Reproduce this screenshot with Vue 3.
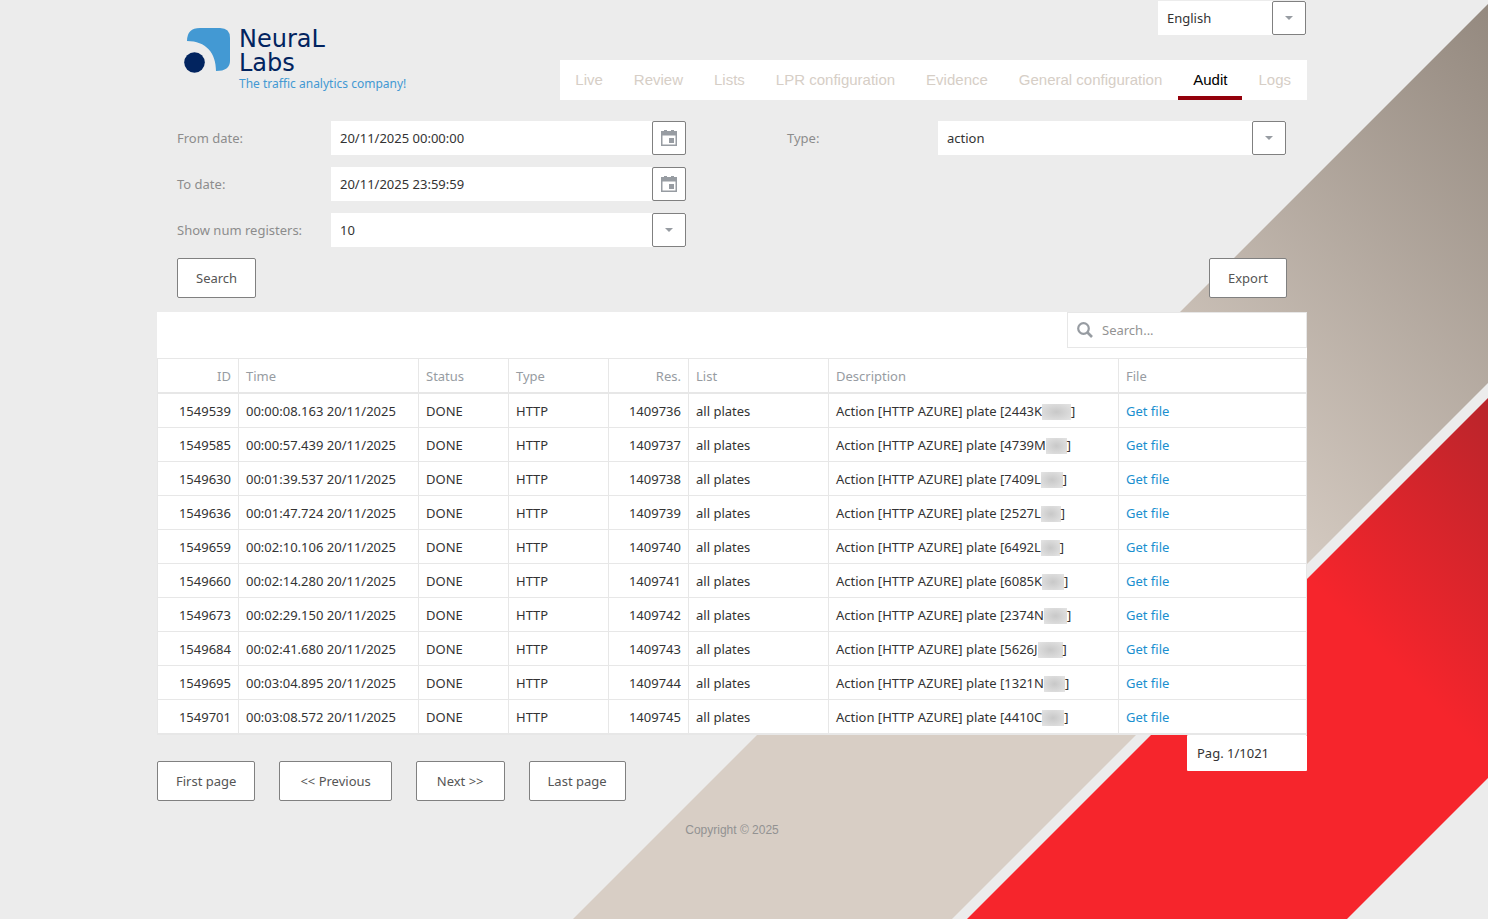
<script setup>
import { ref } from 'vue'

const language = ref('English')
const fromDate = ref('20/11/2025 00:00:00')
const toDate = ref('20/11/2025 23:59:59')
const numRegisters = ref('10')
const type = ref('action')
const query = ref('')

const tabs = ['Live', 'Review', 'Lists', 'LPR configuration', 'Evidence', 'General configuration', 'Audit', 'Logs']
const activeTab = ref('Audit')

const rows = [
  { id: 1549539, time: '00:00:08.163', res: 1409736, plate: '2443K', mask: 29 },
  { id: 1549585, time: '00:00:57.439', res: 1409737, plate: '4739M', mask: 21 },
  { id: 1549630, time: '00:01:39.537', res: 1409738, plate: '7409L', mask: 22 },
  { id: 1549636, time: '00:01:47.724', res: 1409739, plate: '2527L', mask: 20 },
  { id: 1549659, time: '00:02:10.106', res: 1409740, plate: '6492L', mask: 19 },
  { id: 1549660, time: '00:02:14.280', res: 1409741, plate: '6085K', mask: 22 },
  { id: 1549673, time: '00:02:29.150', res: 1409742, plate: '2374N', mask: 23 },
  { id: 1549684, time: '00:02:41.680', res: 1409743, plate: '5626J', mask: 25 },
  { id: 1549695, time: '00:03:04.895', res: 1409744, plate: '1321N', mask: 21 },
  { id: 1549701, time: '00:03:08.572', res: 1409745, plate: '4410C', mask: 22 },
]
</script>

<template>
  <div class="page">
    <svg class="backdrop" viewBox="0 0 1488 919" preserveAspectRatio="xMaxYMin slice" aria-hidden="true">
      <defs>
        <linearGradient id="sand" gradientUnits="userSpaceOnUse" x1="1488" y1="4" x2="1090" y2="402">
          <stop offset="0" stop-color="#94897f" />
          <stop offset="1" stop-color="#d8cec5" />
        </linearGradient>
        <linearGradient id="red" gradientUnits="userSpaceOnUse" x1="1488" y1="398" x2="1307" y2="579">
          <stop offset="0" stop-color="#b9252b" />
          <stop offset="1" stop-color="#f6252c" />
        </linearGradient>
      </defs>
      <path d="M1488 4 573 919H952L1488 383Z" fill="url(#sand)" />
      <path d="M1488 398 967 919H1347L1488 778Z" fill="url(#red)" />
    </svg>

    <div class="container">
      <header class="header">
        <a class="logo" href="#" aria-label="Neural Labs">
          <svg class="mark" viewBox="0 0 46 46" aria-hidden="true">
            <path d="M3 14Q3 1 16 1H36Q46 1 46 11V34Q46 44 32 44C32 26 22 14 3 14Z" fill="#4399d3" />
            <circle cx="10.5" cy="35.5" r="10.3" fill="#02245f" />
          </svg>
          <span class="words">
            <span class="brand">NeuraL</span>
            <span class="brand">Labs</span>
            <span class="tagline">The traffic analytics company!</span>
          </span>
        </a>
        <div class="header-right">
          <div class="combo language">
            <select v-model="language" aria-label="Language"><option>English</option></select>
            <span class="combo-arrow"></span>
          </div>
          <nav class="tabs">
            <a v-for="t in tabs" :key="t" href="#" :class="{ active: t === activeTab }" @click.prevent="activeTab = t">{{ t }}</a>
          </nav>
        </div>
      </header>

      <form class="filters" @submit.prevent>
        <div class="columns">
          <div class="column">
            <div class="field">
              <label for="from">From date:</label>
              <div class="date">
                <input id="from" v-model="fromDate" type="text" />
                <button type="button" aria-label="Pick from date">
                  <svg viewBox="0 0 16 16"><path fill-rule="evenodd" d="M0 1H3V0H6V1H10V0H13V1H16V16H0ZM1.5 5.5V14.5H14.5V5.5ZM8 8H13V13H8Z" /></svg>
                </button>
              </div>
            </div>
            <div class="field">
              <label for="to">To date:</label>
              <div class="date">
                <input id="to" v-model="toDate" type="text" />
                <button type="button" aria-label="Pick to date">
                  <svg viewBox="0 0 16 16"><path fill-rule="evenodd" d="M0 1H3V0H6V1H10V0H13V1H16V16H0ZM1.5 5.5V14.5H14.5V5.5ZM8 8H13V13H8Z" /></svg>
                </button>
              </div>
            </div>
            <div class="field">
              <label for="num">Show num registers:</label>
              <div class="combo">
                <select id="num" v-model="numRegisters"><option>10</option></select>
                <span class="combo-arrow"></span>
              </div>
            </div>
          </div>
          <div class="column">
            <div class="field">
              <label for="type">Type:</label>
              <div class="combo">
                <select id="type" v-model="type"><option>action</option></select>
                <span class="combo-arrow"></span>
              </div>
            </div>
          </div>
        </div>
        <div class="actions">
          <button class="btn" type="submit">Search</button>
          <button class="btn" type="button">Export</button>
        </div>
      </form>

      <section class="results">
        <div class="toolbar">
          <div class="search">
            <svg viewBox="0 0 16 16" aria-hidden="true">
              <circle cx="6.5" cy="6.5" r="5.3" fill="none" stroke="#979ca2" stroke-width="2.2" />
              <path d="M10.5 10.5 15 15" stroke="#979ca2" stroke-width="2.6" />
            </svg>
            <input v-model="query" type="text" placeholder="Search..." aria-label="Search results" />
          </div>
        </div>
        <table>
          <colgroup>
            <col class="c-id" /><col class="c-time" /><col class="c-status" /><col class="c-type" />
            <col class="c-res" /><col class="c-list" /><col class="c-desc" /><col />
          </colgroup>
          <thead>
            <tr>
              <th class="num">ID</th><th>Time</th><th>Status</th><th>Type</th>
              <th class="num">Res.</th><th>List</th><th>Description</th><th>File</th>
            </tr>
          </thead>
          <tbody>
            <tr v-for="r in rows" :key="r.id">
              <td class="num">{{ r.id }}</td>
              <td>{{ r.time }} 20/11/2025</td>
              <td>DONE</td>
              <td>HTTP</td>
              <td class="num">{{ r.res }}</td>
              <td>all plates</td>
              <td>Action [HTTP AZURE] plate [{{ r.plate }}<span class="mask" :style="{ width: r.mask + 'px' }"></span>]</td>
              <td><a href="#">Get file</a></td>
            </tr>
          </tbody>
        </table>
      </section>

      <div class="paging">
        <div class="pager">
          <button class="btn" type="button">First page</button>
          <button class="btn step" type="button">&lt;&lt; Previous</button>
          <button class="btn step" type="button">Next &gt;&gt;</button>
          <button class="btn" type="button">Last page</button>
        </div>
        <div class="page-count">Pag. 1/1021</div>
      </div>

      <footer>Copyright © 2025</footer>
    </div>
  </div>
</template>

<style>
body {
  background: #ececec;
}
</style>

<style scoped>
.page,
.page * {
  box-sizing: border-box;
}

.page {
  position: relative;
  min-height: 100vh;
  padding-right: 24px;
  overflow: hidden;
  color: #333;
  font: 13px/18px "Noto Sans", "Open Sans", sans-serif;
}

.backdrop {
  position: absolute;
  inset: 0;
  width: 100%;
  height: 100%;
}

.container {
  position: relative;
  max-width: 1150px;
  margin: 0 auto;
}

input,
select,
button {
  font: inherit;
  color: inherit;
}

a {
  text-decoration: none;
}

.header {
  display: flex;
  justify-content: space-between;
  height: 100px;
}

.logo {
  display: flex;
  align-items: flex-start;
  gap: 9px;
  padding: 27px 0 0 27px;
}

.mark {
  width: 46px;
  height: 46px;
}

.words {
  display: flex;
  flex-direction: column;
}

.brand {
  color: #02245f;
  font: 24px/24px "DejaVu Sans", sans-serif;
}

.tagline {
  color: #4399d3;
  font-size: 12px;
  line-height: 18px;
}

.header-right {
  display: flex;
  flex-direction: column;
  align-items: flex-end;
  justify-content: space-between;
  padding-top: 1px;
}

.language {
  width: 148px;
  margin-right: 1px;
}

.tabs {
  display: flex;
  gap: 1px;
  padding-right: 1px;
  background: #fff;
}

.tabs a {
  height: 40px;
  padding: 0 15px;
  border-bottom: 4px solid transparent;
  color: #d6cec6;
  font: 15px/40px "Liberation Sans", Arial, sans-serif;
}

.tabs .active {
  border-color: #93000b;
  color: #000;
}

.filters {
  padding: 21px 20px 14px;
}

.columns {
  display: grid;
  grid-template-columns: 509fr 499fr;
  gap: 101px;
  padding-right: 1px;
}

.column,
.field,
.date {
  display: flex;
}

.column {
  flex-direction: column;
  gap: 12px;
}

.field {
  align-items: center;
}

.field label {
  flex: 0 0 154px;
  color: #8c8c8c;
}

.column + .column label {
  flex-basis: 151px;
}

.field .combo,
.date {
  flex: 1;
}

.date input,
.combo select {
  flex: 1;
  min-width: 0;
  height: 34px;
  padding: 0 9px;
  border: 0;
  border-radius: 0;
  outline: 0;
  background: #fff;
  appearance: none;
}

.date button {
  display: grid;
  place-items: center;
  width: 34px;
  height: 34px;
  padding: 0;
  border: 1px solid #808080;
  border-radius: 2px;
  background: #fff;
}

.date svg {
  width: 16px;
  height: 16px;
  fill: #979ca2;
}

.combo {
  display: grid;
}

.combo select {
  grid-area: 1 / 1;
  width: 100%;
}

.combo-arrow {
  display: grid;
  grid-area: 1 / 1;
  place-items: center;
  justify-self: end;
  width: 34px;
  height: 34px;
  border: 1px solid #808080;
  border-radius: 2px;
  background: #fff;
  pointer-events: none;
}

.combo-arrow::after {
  border: 4px solid transparent;
  border-top-color: #979ca2;
  border-bottom: 0;
  content: "";
}

.actions {
  display: flex;
  justify-content: space-between;
  margin-top: 11px;
}

.btn {
  height: 40px;
  padding: 0 18px;
  border: 1px solid #808080;
  border-radius: 2px;
  background: #fff;
  color: #555;
}

.step {
  padding: 0 20px;
}

.toolbar {
  display: flex;
  justify-content: flex-end;
  height: 46px;
  background: #fff;
}

.search {
  display: flex;
  align-items: center;
  gap: 9px;
  width: 240px;
  height: 36px;
  padding: 0 9px;
  border: 1px solid #e7e7e7;
}

.search svg {
  flex: none;
  width: 16px;
  height: 16px;
}

.search input {
  flex: 1;
  min-width: 0;
  padding: 0;
  border: 0;
  outline: 0;
}

.search input::placeholder {
  color: #939393;
}

table {
  width: 100%;
  table-layout: fixed;
  border: 1px solid #e7e7e7;
  border-right: 0;
  border-spacing: 0;
  background: #fff;
}

.c-id { width: 81px; }
.c-time { width: 180px; }
.c-status { width: 90px; }
.c-type { width: 100px; }
.c-res { width: 80px; }
.c-list { width: 140px; }
.c-desc { width: 290px; }

th,
td {
  height: 34px;
  padding: 0 7px;
  border-right: 1px solid #e7e7e7;
  border-bottom: 1px solid #e7e7e7;
  text-align: left;
  white-space: nowrap;
}

th {
  height: 35px;
  border-bottom-width: 2px;
  color: #979ca2;
  font-weight: 400;
}

.num {
  text-align: right;
}

td a {
  color: #1a8fcf;
}

.mask {
  display: inline-block;
  height: 16px;
  background: radial-gradient(#c8c8c8, #e4e4e4);
  vertical-align: text-bottom;
}

.paging {
  display: flex;
  align-items: flex-start;
  justify-content: space-between;
}

.pager {
  display: flex;
  gap: 24px;
  padding-top: 26px;
}

.page-count {
  width: 120px;
  padding: 9px 10px;
  border-radius: 1px;
  background: #fff;
}

footer {
  padding: 20px 0;
  color: #929292;
  font: 12px/18px "Liberation Sans", Arial, sans-serif;
  text-align: center;
}
</style>
